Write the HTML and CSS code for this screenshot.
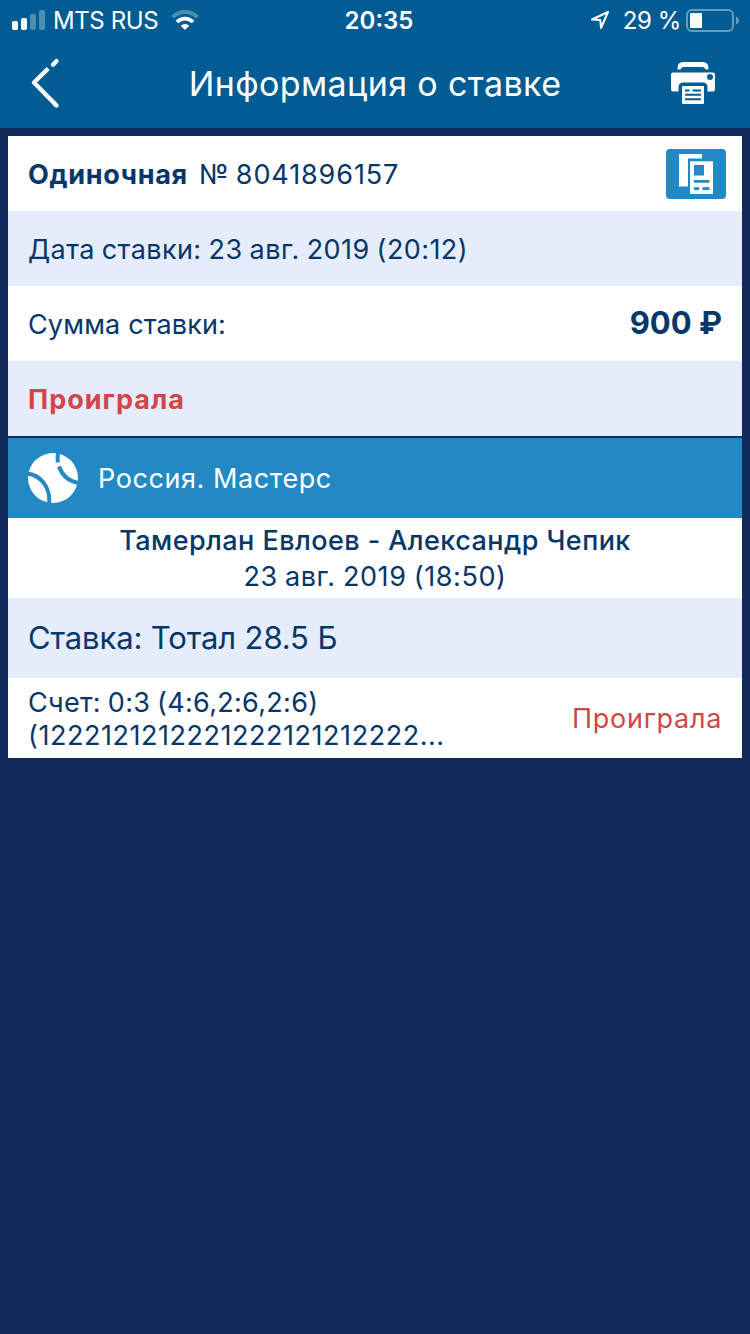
FILE: index.html
```html
<!DOCTYPE html>
<html lang="ru">

<head>
  <meta charset="utf-8" />
  <title>Информация о ставке</title>
  <link rel="stylesheet" href="styles.css">
</head>

<body>
  <header class="header">
    <div class="status">
      <div class="status-left">
        <svg class="signal" width="34" height="20" viewBox="0 0 34 20" fill="#fff">
          <rect x="0" y="11" width="6" height="9" rx="1.8" />
          <rect x="9" y="8" width="6" height="12" rx="1.8" />
          <rect x="18" y="4" width="6" height="16" rx="1.8" opacity=".3" />
          <rect x="27" y="0" width="6" height="20" rx="1.8" opacity=".3" />
        </svg>
        <span class="carrier">MTS RUS</span>
        <svg class="wifi" width="28" height="20" viewBox="0 0 28 20" fill="none" stroke="#fff">
          <path d="M1.6 7.2a17.600 17.600 0 0 1 24.800 0" stroke-width="4" opacity=".3" />
          <path d="M6 12a11.300 11.300 0 0 1 16 0" stroke-width="3.800" />
          <path d="M14 20l-4.300-4.300a6 6 0 0 1 8.600 0z" fill="#fff" stroke="none" />
        </svg>
      </div>
      <span class="clock">20:35</span>
      <div class="status-right">
        <svg class="location" width="20" height="20" viewBox="0 0 20 20" fill="none" stroke="#fff" stroke-width="2" stroke-linejoin="round">
          <path d="M18 2L2 9.500l8.300.6.7 7.900z" />
        </svg>
        <span class="percent">29 %</span>
        <svg class="battery" width="54" height="24" viewBox="0 0 54 24">
          <rect x="1" y="2" width="46" height="21" rx="5" fill="none" stroke="#fff" stroke-width="2" opacity=".4" />
          <rect x="4" y="5" width="12" height="15" rx="1" fill="#fff" />
          <path d="M50 8.500c4 1.500 4 6.500 0 8z" fill="#fff" opacity=".4" />
        </svg>
      </div>
    </div>
    <div class="navbar">
      <svg class="back" width="30" height="52" viewBox="0 0 30 52" fill="none" stroke="#fff" stroke-width="4.400" stroke-linecap="round">
        <path d="M26.500 4l-3.500 3.700" />
        <path d="M26 48L4 25.500 18.200 11.500" stroke-linecap="butt" stroke-linejoin="round" />
        <path d="M26.500 48.500l-1-1" />
      </svg>
      <h1 class="title">Информация о ставке</h1>
      <svg class="print" width="44" height="42" viewBox="0 0 44 42">
        <path d="M6.500 7.500V6q0-6 6-6h19q6 0 6 6v1.500h-3q-.5-2.500-3-2.500h-19q-2.500 0-3 2.500z" fill="#fff" />
        <path d="M2 10.500h40q2 0 2 2v15q0 2-2 2h-5.500v-4q0-5-5-5h-19q-5 0-5 5v4H2q-2 0-2-2v-15q0-2 2-2z" fill="#fff" />
        <circle cx="39" cy="15" r="3" fill="#005c93" />
        <rect x="11" y="24" width="22" height="18" rx="1" fill="#fff" />
        <path d="M14 28.500h4.500M21.500 28.500H30M14 32.700h16M14 37.200h16" stroke="#005c93" stroke-width="2" />
      </svg>
    </div>
  </header>

  <main class="ticket">
    <div class="row">
      <p><b class="kind">Одиночная</b><span class="number">№ 8041896157</span></p>
      <svg class="copy" width="60" height="50" viewBox="0 0 60 50">
        <rect width="60" height="50" rx="4" fill="#2389c5" />
        <path d="M13 5h23v4.500H22v28h-9z" fill="#fff" />
        <rect x="24" y="12.300" width="23" height="32.700" fill="#fff" />
        <path d="M28 16h10v10.500H28zM28 31h15.500v2.700H28zM28 38.300h5v2.700h-5zM36.500 38.300h7v2.700h-7z" fill="#2389c5" />
      </svg>
    </div>
    <div class="row row-alt">
      <p class="date">Дата ставки: 23 авг. 2019 (20:12)</p>
    </div>
    <div class="row">
      <p class="sum-label">Сумма ставки:</p>
      <b class="sum">900 ₽</b>
    </div>
    <div class="row row-alt">
      <b class="status-lost">Проиграла</b>
    </div>

    <div class="league">
      <svg class="ball" width="50" height="50" viewBox="0 0 50 50" fill="none">
        <circle cx="25" cy="25" r="25" fill="#fff" />
        <g stroke="#2389c5" stroke-width="4">
          <path d="M-1 20.500C13 22 23 35 21 51" />
          <path d="M30-1Q29.500 4 29.800 9.300" />
          <path d="M31 13.500C34 22 41 28.500 51 30" />
        </g>
      </svg>
      <span class="league-name">Россия. Мастерс</span>
    </div>
    <div class="match">
      <p class="players">Тамерлан Евлоев - Александр Чепик</p>
      <p class="match-date">23 авг. 2019 (18:50)</p>
    </div>
    <div class="bet">Ставка: Тотал 28.5 Б</div>
    <div class="result">
      <div class="score">
        <p class="sets">Счет: 0:3 (4:6,2:6,2:6)</p>
        <p class="points">(1222121212221222121212222...</p>
      </div>
      <span class="result-lost">Проиграла</span>
    </div>
  </main>
</body>

</html>
```
FILE: styles.css
```css
* {
  margin: 0;
  padding: 0;
  box-sizing: border-box;
}

body {
  background-color: #12295b;
  color: #053668;
  font-family: Inter, "Liberation Sans", sans-serif;
  font-size: 27px;
  white-space: nowrap;
}

svg {
  display: block;
  flex: none;
}

.header {
  height: 128px;
  background-color: #005c93;
  color: #fff;
}

.status {
  display: grid;
  grid-template-columns: 1fr auto 1fr;
  align-items: center;
  height: 40px;
  padding: 0 4px 0 12px;
  font-size: 24px;
}

.status-left,
.status-right {
  display: flex;
  align-items: center;
}

.status-right {
  justify-content: flex-end;
  padding-right: 6px;
}

.carrier {
  margin-left: 7px;
  letter-spacing: -0.4px;
}

.wifi {
  margin-left: 13px;
}

.clock {
  font-weight: 600;
}

.percent {
  margin: 0 5px 0 13px;
  letter-spacing: -0.4px;
}

.navbar {
  display: grid;
  grid-template-columns: 1fr auto 1fr;
  align-items: center;
  height: 86px;
  padding: 0 35px;
}

.back {
  margin-left: -5px;
}

.print {
  justify-self: end;
}

.title {
  font-size: 34px;
  font-weight: 400;
  letter-spacing: 0.38px;
}

.ticket {
  margin: 8px 8px 0;
  background-color: #fff;
}

.row {
  display: flex;
  align-items: center;
  justify-content: space-between;
  height: 75px;
  padding: 0 20px;
}

.row p,
.status-lost {
  padding-top: 2px;
}

.row-alt,
.bet {
  background-color: #e5edfd;
}

.kind {
  letter-spacing: 0.7px;
}

.number {
  margin-left: 11px;
  letter-spacing: 0.9px;
  word-spacing: -2px;
}

.date {
  letter-spacing: 0.43px;
  word-spacing: -1px;
}

.sum-label {
  letter-spacing: 0.15px;
}

.copy {
  margin-right: -4px;
}

.sum {
  padding-bottom: 2px;
  font-size: 31px;
}

.status-lost,
.result-lost {
  color: #d24548;
  letter-spacing: 0.7px;
}

.status-lost {
  letter-spacing: 1px;
}

.league {
  display: flex;
  align-items: center;
  height: 82px;
  padding: 0 20px;
  border-top: 2px solid #073664;
  background-color: #2389c5;
  color: #fff;
}

.league-name {
  margin-left: 20px;
  letter-spacing: 0.57px;
}

.match {
  height: 80px;
  padding-top: 5px;
  line-height: 36px;
  text-align: center;
  letter-spacing: 0.44px;
}

.players {
  font-weight: 500;
}

.match-date {
  letter-spacing: 0.6px;
  word-spacing: -1px;
}

.bet {
  height: 80px;
  padding-left: 20px;
  font-size: 31px;
  line-height: 80px;
  letter-spacing: -0.13px;
}

.result {
  display: flex;
  align-items: center;
  justify-content: space-between;
  height: 80px;
  padding: 0 20px;
  line-height: 33px;
}

.score {
  padding-top: 2px;
}

.sets {
  letter-spacing: 0.3px;
  word-spacing: -1px;
}

.points {
  letter-spacing: 0.54px;
}
```
